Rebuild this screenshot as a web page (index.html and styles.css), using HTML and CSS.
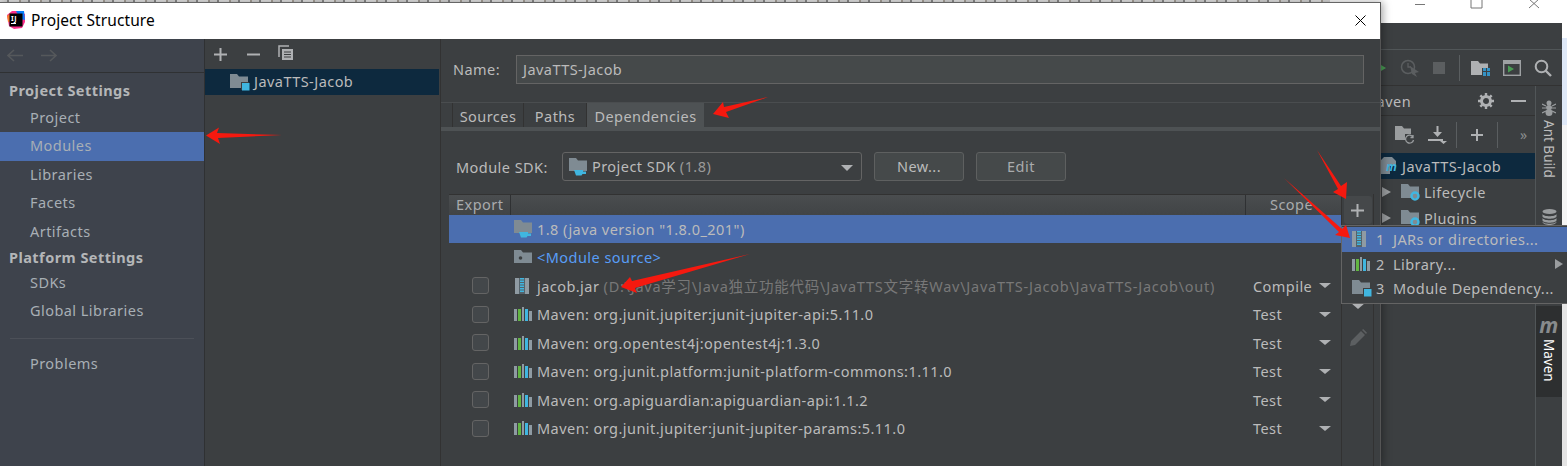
FILE: index.html
```html
<!DOCTYPE html>
<html lang="en">
<head>
<meta charset="utf-8">
<title>Project Structure</title>
<link rel="stylesheet" href="styles.css">
</head>
<body>
<svg class="defs" width="0" height="0">
  <symbol id="folder" viewBox="0 0 18 16"><path d="M0 1h7l2 2.5h9V15H0z" fill="#7f8b93"/></symbol>
  <symbol id="module" viewBox="0 0 20 18"><path d="M0 1h7l2 2.5h9V15H0z" fill="#7f8b93"/><rect x="11" y="9" width="8" height="8" fill="#3c3f41"/><rect x="12" y="10" width="7.5" height="7.5" fill="#40b6e0"/></symbol>
  <symbol id="jdk" viewBox="0 0 20 18"><path d="M0 0h7l2 2.5h9V13H0z" fill="#7f8b93"/><path d="M5 12h9v1.5h3V16h-3.500l-1 1.500h-5.500z" fill="#40b6e0"/></symbol>
  <symbol id="source" viewBox="0 0 18 16"><path d="M0 1h7l2 2.500h9V14H0z" fill="#7f8b93"/><circle cx="6.500" cy="9" r="1.800" fill="#3c3f41"/></symbol>
  <symbol id="lib" viewBox="0 0 18 16"><rect x="0" y="3" width="3" height="12" fill="#8f9ba3"/><rect x="4" y="3" width="3" height="12" fill="#62b543"/><rect x="8" y="1" width="2" height="14" fill="#8f9ba3"/><rect x="11" y="3" width="3" height="12" fill="#40b6e0"/><rect x="15" y="5" width="3" height="10" fill="#8f9ba3"/></symbol>
  <symbol id="jar" viewBox="0 0 14 18"><rect x="0" y="1" width="14" height="16" fill="#8f9ba3"/><rect x="4" y="1" width="6" height="16" fill="#55636b"/><path d="M5 1h4v1.500H5zM5 3.500h4V5H5zM5 6h4v1.500H5zM5 8.500h4V10H5zM5 11h4v1.500H5zM5 13.500h4V15H5z" fill="#40b6e0"/></symbol>
</svg>

<div class="desk">
  <div class="blogtop"></div>
  <div class="blogedge"></div>

  <div class="ide">
    <div class="ide-title">
      <svg class="winctl" width="134" height="10" viewBox="0 0 134 10"><path d="M0 4.500h10M56 -3h11v11H56zM114 -1l10 9M124 -1l-10 9" fill="none" stroke="#777"/></svg>
    </div>
    <div class="ide-menu"></div>
    <div class="ide-tools">
      <svg width="6" height="6" viewBox="0 0 6 6"><path d="M0 0l5 3-5 3z" fill="#499c54"/></svg>
      <svg width="20" height="18" viewBox="0 0 20 18"><circle cx="8" cy="8" r="6.500" fill="none" stroke="#5b5e60" stroke-width="1.500"/><path d="M8 4v4h3" fill="none" stroke="#5b5e60" stroke-width="1.300"/><path d="M10 7l9 6-4 1 2 4-5-3z" fill="#5b5e60"/></svg>
      <span class="tb-stop"></span>
      <span class="tb-sep"></span>
      <svg width="19" height="16" viewBox="0 0 19 16"><path d="M0 1h7l2 2.500h8V8h-6v7H0z" fill="#afb1b3"/><path d="M12 8h3v3h-3zM16 8h3v3h-3zM12 12h3v4h-3zM16 12h3v4h-3z" fill="#3592c4"/></svg>
      <svg width="18" height="16" viewBox="0 0 18 16"><rect x=".7" y=".7" width="16.600" height="14.600" fill="none" stroke="#9ea1a3" stroke-width="1.400"/><rect x="1" y="1" width="16" height="3" fill="#9ea1a3"/><path d="M5 5.500l6 3.500-6 3.500z" fill="#499c54"/></svg>
      <svg width="18" height="18" viewBox="0 0 18 18"><circle cx="7.500" cy="7.500" r="5.800" fill="none" stroke="#afb1b3" stroke-width="2"/><path d="M11.500 11.500l5.500 5.500" stroke="#afb1b3" stroke-width="2.400"/></svg>
    </div>
    <div class="ide-body">
      <div class="maven">
        <div class="mv-head">
          <span class="mv-title">Maven</span>
          <svg class="mv-gear" width="16" height="16" viewBox="0 0 16 16"><circle cx="8" cy="8" r="4.500" fill="none" stroke="#afb1b3" stroke-width="3"/><path d="M8 0v3M8 13v3M0 8h3M13 8h3M2.300 2.300l2.100 2.100M11.600 11.600l2.100 2.100M2.300 13.700l2.100-2.100M11.600 4.400l2.100-2.100" stroke="#afb1b3" stroke-width="2.400"/></svg>
          <span class="mv-min"></span>
        </div>
        <div class="mv-tools">
          <svg width="20" height="18" viewBox="0 0 20 18"><path d="M0 0h7l2 2.500h7V8h-6v6H0z" fill="#9a9d9f"/><path d="M18 11a4 4 0 1 0 .5 3M18 9v2.500h-2.500" fill="none" stroke="#9a9d9f" stroke-width="1.300"/></svg>
          <svg width="20" height="18" viewBox="0 0 20 18"><path d="M8.500 0h2v6H14l-4.500 5L5 6h3.500zM0 13h15v2H0zM12 15h7l-3.500 3z" fill="#afb1b3"/></svg>
          <span class="mv-sep first"></span>
          <svg width="14" height="14" viewBox="0 0 14 14"><path d="M7 1v12M1 7h12" stroke="#afb1b3" stroke-width="2"/></svg>
          <span class="mv-sep"></span>
          <span class="mv-more">»</span>
        </div>
        <div class="tree-row tree-sel">
          <svg class="mv-file" width="20" height="18" viewBox="0 0 20 18"><path d="M3 0h8l4 4v5H9v8H0V3z" fill="#7f8b93"/><text x="5" y="14" class="mv-m">m</text></svg>
          <span>JavaTTS-Jacob</span>
        </div>
        <div class="tree-row tree-child">
          <span class="caret"></span>
          <svg width="20" height="18"><use href="#folder" width="18" height="16"/><circle cx="14" cy="13" r="3.500" fill="none" stroke="#40b6e0" stroke-width="2.400"/></svg>
          <span>Lifecycle</span>
        </div>
        <div class="tree-row tree-child">
          <span class="caret"></span>
          <svg width="20" height="18"><use href="#folder" width="18" height="16"/><circle cx="14" cy="13" r="3.500" fill="none" stroke="#40b6e0" stroke-width="2.400"/></svg>
          <span>Plugins</span>
        </div>
      </div>
      <div class="strip">
        <svg class="ant" width="14" height="16" viewBox="0 0 14 16"><ellipse cx="7" cy="3" rx="2.500" ry="2.500" fill="#9a9d9f"/><ellipse cx="7" cy="7.500" rx="3" ry="2.500" fill="#9a9d9f"/><ellipse cx="7" cy="12.500" rx="3.500" ry="3.500" fill="#9a9d9f"/><path d="M0 4l4 2M14 4l-4 2M0 8h4M14 8h-4M0 13l4-2M14 13l-4-2" stroke="#9a9d9f" stroke-width="1.200"/></svg>
        <span class="vtext vt-ant">Ant Build</span>
        <svg class="db" width="15" height="16" viewBox="0 0 15 16"><ellipse cx="7.500" cy="2.500" rx="7" ry="2.500" fill="#9a9d9f"/><path d="M.5 5c1 3 13 3 14 0v2.500c-1 3-13 3-14 0zM.5 9c1 3 13 3 14 0v2.500c-1 3-13 3-14 0zM.5 12.500c1 3 13 3 14 0V13c-1 4-13 4-14 0z" fill="#9a9d9f"/></svg>
        <div class="mvn-tab">
          <span class="mvn-m">m</span>
          <span class="vtext vt-mvn">Maven</span>
        </div>
      </div>
    </div>
  </div>

  <div class="dialog">
    <div class="d-title">
      <svg class="logo" width="20" height="20" viewBox="0 0 20 20"><path d="M1 5L6 1l8 0 5 3v8l-3 6-8 1-5-3z" fill="#fc318c"/><path d="M10 1h8l1 9-5-1z" fill="#087cfa"/><path d="M1 6l4-3 1 8-4 1z" fill="#fe7c2f"/><rect x="3.500" y="3.500" width="13" height="13" fill="#000"/><text x="5" y="10.500" class="logo-t">IJ</text><rect x="5" y="13" width="5" height="1" fill="#fff"/></svg>
      <span class="d-title-text">Project Structure</span>
      <svg class="d-close" width="11" height="11" viewBox="0 0 11 11"><path d="M.5.500l10 10M10.500.500l-10 10" stroke="#000" stroke-width="1"/></svg>
    </div>
    <div class="d-body">
      <aside class="side">
        <div class="side-nav">
          <svg width="17" height="13" viewBox="0 0 17 13"><path d="M1 6.500h15M7 1L1 6.500 7 12" fill="none" stroke="#55585b" stroke-width="1.600"/></svg>
          <svg width="17" height="13" viewBox="0 0 17 13"><path d="M16 6.500H1M10 1l6 5.500L10 12" fill="none" stroke="#55585b" stroke-width="1.600"/></svg>
        </div>
        <div class="side-list">
          <div class="side-head">Project Settings</div>
          <div class="side-item">Project</div>
          <div class="side-item is-on">Modules</div>
          <div class="side-item">Libraries</div>
          <div class="side-item">Facets</div>
          <div class="side-item">Artifacts</div>
          <div class="side-head second">Platform Settings</div>
          <div class="side-item">SDKs</div>
          <div class="side-item">Global Libraries</div>
          <div class="side-div"></div>
          <div class="side-item">Problems</div>
        </div>
      </aside>

      <section class="mods">
        <div class="mods-tools">
          <svg width="13" height="13" viewBox="0 0 13 13"><path d="M6.500 0v13M0 6.500h13" stroke="#afb1b3" stroke-width="2"/></svg>
          <svg width="13" height="13" viewBox="0 0 13 13"><path d="M0 6.500h13" stroke="#afb1b3" stroke-width="2"/></svg>
          <svg class="copy-ico" width="16" height="16" viewBox="0 0 16 16"><path d="M1 12V1h10" fill="none" stroke="#afb1b3" stroke-width="1.500"/><rect x="4" y="4" width="11" height="11" fill="#afb1b3"/><path d="M6 7h7M6 9.500h7M6 12h7" stroke="#3c3f41"/></svg>
        </div>
        <div class="mods-row">
          <svg width="20" height="18"><use href="#module" width="20" height="18"/></svg>
          <span class="mods-name">JavaTTS-Jacob</span>
        </div>
      </section>

      <main class="panel">
        <div class="name-row">
          <label class="name-label">Name:</label>
          <div class="name-input">JavaTTS-Jacob</div>
        </div>
        <div class="tabs">
          <span class="tab t1">Sources</span>
          <span class="tab t2">Paths</span>
          <span class="tab t3 is-on">Dependencies</span>
        </div>
        <div class="tabs-line"></div>
        <div class="sdk-row">
          <span class="sdk-label">Module SDK:</span>
          <div class="combo">
            <svg width="20" height="18"><use href="#jdk" width="20" height="18"/></svg>
            <span class="combo-text">Project SDK <em class="dim">(1.8)</em></span>
            <span class="combo-arrow"></span>
          </div>
          <span class="btn b-new">New...</span>
          <span class="btn b-edit">Edit</span>
        </div>
        <div class="dep-wrap">
          <div class="dep-table">
            <div class="dep-head">
              <span class="h-export">Export</span>
              <span class="h-mid"></span>
              <span class="h-scope">Scope</span>
            </div>
            <div class="dep-row is-sel">
              <span class="cb none"></span>
              <svg class="ico ico-jdk" width="20" height="18"><use href="#jdk" width="20" height="18"/></svg>
              <span class="dep-name">1.8 (java version "1.8.0_201")</span>
            </div>
            <div class="dep-row">
              <span class="cb none"></span>
              <svg class="ico" width="18" height="16"><use href="#source" width="18" height="16"/></svg>
              <span class="dep-name link">&lt;Module source&gt;</span>
            </div>
            <div class="dep-row">
              <span class="cb"></span>
              <svg class="ico" width="18" height="18"><use href="#jar" x="1" width="14" height="18"/></svg>
              <span class="dep-name">jacob.jar <span class="path">(D:\Java学习\Java独立功能代码\JavaTTS文字转Wav\JavaTTS-Jacob\JavaTTS-Jacob\out)</span></span>
              <span class="scope">Compile</span><span class="arrow"></span>
            </div>
            <div class="dep-row">
              <span class="cb"></span>
              <svg class="ico" width="18" height="16"><use href="#lib" width="18" height="16"/></svg>
              <span class="dep-name">Maven: org.junit.jupiter:junit-jupiter-api:5.11.0</span>
              <span class="scope">Test</span><span class="arrow"></span>
            </div>
            <div class="dep-row">
              <span class="cb"></span>
              <svg class="ico" width="18" height="16"><use href="#lib" width="18" height="16"/></svg>
              <span class="dep-name">Maven: org.opentest4j:opentest4j:1.3.0</span>
              <span class="scope">Test</span><span class="arrow"></span>
            </div>
            <div class="dep-row">
              <span class="cb"></span>
              <svg class="ico" width="18" height="16"><use href="#lib" width="18" height="16"/></svg>
              <span class="dep-name">Maven: org.junit.platform:junit-platform-commons:1.11.0</span>
              <span class="scope">Test</span><span class="arrow"></span>
            </div>
            <div class="dep-row">
              <span class="cb"></span>
              <svg class="ico" width="18" height="16"><use href="#lib" width="18" height="16"/></svg>
              <span class="dep-name">Maven: org.apiguardian:apiguardian-api:1.1.2</span>
              <span class="scope">Test</span><span class="arrow"></span>
            </div>
            <div class="dep-row">
              <span class="cb"></span>
              <svg class="ico" width="18" height="16"><use href="#lib" width="18" height="16"/></svg>
              <span class="dep-name">Maven: org.junit.jupiter:junit-jupiter-params:5.11.0</span>
              <span class="scope">Test</span><span class="arrow"></span>
            </div>
          </div>
          <div class="dep-tools">
            <span class="plus-btn"><svg width="13" height="13" viewBox="0 0 13 13"><path d="M6.500 0v13M0 6.500h13" stroke="#afb1b3" stroke-width="2"/></svg></span>
            <span class="tool-down"></span>
            <svg class="tool-pencil" width="18" height="18" viewBox="0 0 18 18"><path d="M1 17l1-5L12 2l4 4L6 16zM13 1l1.200-1 3.800 3.800-1 1.200z" fill="#5c5f61"/></svg>
          </div>
          <div class="dep-gutter"></div>
        </div>
      </main>
    </div>
  </div>

  <div class="popup">
    <div class="pop-row is-sel">
      <svg class="pop-ico" width="14" height="18"><use href="#jar" width="14" height="18"/></svg>
      <span class="pop-n">1</span><span>JARs or directories...</span>
    </div>
    <div class="pop-row">
      <svg class="pop-ico" width="18" height="16"><use href="#lib" width="18" height="16"/></svg>
      <span class="pop-n">2</span><span>Library...</span><span class="pop-sub"></span>
    </div>
    <div class="pop-row">
      <svg class="pop-ico" width="20" height="18"><use href="#module" width="20" height="18"/></svg>
      <span class="pop-n">3</span><span>Module Dependency...</span>
    </div>
  </div>

  <svg class="marks" width="1567" height="466" viewBox="0 0 1567 466">
    <g fill="#f5190f">
      <path d="M206 135.500L219 127.500 217 133 282 135 218 138 220 144z"/>
      <path d="M713 114L723 102 724 107 768 97 726 112 729 118z"/>
      <path d="M621 287L630 277 632 281 750 254 635 288 637 293z"/>
      <path d="M1317 150L1341 186 1347 182 1346 199 1333 192 1338 189z"/>
      <path d="M1284 178L1342 229 1346 225 1350 238 1335 235 1339 232z"/>
    </g>
  </svg>
</div>
</body>
</html>
```

FILE: styles.css
```css
* { box-sizing: border-box; }
html, body { margin: 0; padding: 0; height: 100%; background: #eee; overflow: hidden; }
body { font-family: "Noto Sans", "Noto Sans CJK SC", sans-serif; font-size: 14.5px; letter-spacing: .45px; color: #bbbbbb; }
svg { display: block; flex: none; }
.defs { position: absolute; }

.desk { position: relative; width: 1567px; height: 466px; overflow: hidden; background: #f1f1f1; }
.blogtop {
  position: absolute; left: 0; top: 0; width: 1400px; height: 3px;
  background: repeating-linear-gradient(90deg, #d8d8d8 0 7px, #8b8b8b 7px 9px, #e6e6e6 9px 19px, #a8a29a 19px 21px);
}
.blogedge {
  position: absolute; left: 1562px; top: 0; width: 5px; height: 466px;
  background: linear-gradient(#fff 0 38px, #dfe9f8 38px 125px, #f4f4f4 125px 300px, #e4e4e4 300px);
}

/* IDE window behind the dialog */
.ide { position: absolute; left: 1330px; top: 0; width: 232px; height: 466px; background: #3c3f41; display: flex; flex-direction: column; }
.ide-title { height: 23px; background: #fff; position: relative; flex: none; }
.winctl { position: absolute; left: 85px; top: 0; }
.ide-menu { height: 27px; border-bottom: 1px solid #515658; flex: none; }
.ide-tools { height: 35px; flex: none; display: flex; align-items: center; gap: 13px; padding-right: 10px; justify-content: flex-end; }
.tb-stop { width: 12px; height: 12px; background: #5b5e60; }
.tb-sep { width: 1px; height: 26px; background: #5a5e60; margin: 0 -2px 0 1px; }
.ide-body { flex: 1; display: flex; border-top: 1px solid #323232; min-height: 0; }
.maven { flex: 1; min-width: 0; display: flex; flex-direction: column; }
.mv-head { height: 30px; flex: none; display: flex; align-items: center; padding-left: 33px; padding-top: 1px; border-bottom: 1px solid #323232; }
.mv-title { width: 115px; }
.mv-gear { margin-right: 17px; margin-top: -1px; }
.mv-min { width: 15px; height: 2px; background: #afb1b3; margin-top: -1px; }
.mv-tools { height: 37px; flex: none; display: flex; align-items: center; padding-left: 65px; gap: 13px; }
.mv-sep { width: 1px; height: 26px; background: #5a5e60; flex: none; }
.mv-sep.first { margin-left: -5px; }
.mv-more { font-size: 14px; margin-left: 9px; color: #8a8d8f; }
.tree-row { display: flex; align-items: center; height: 26px; flex: none; }
.tree-sel { background: #0d293e; margin-left: 50px; padding-left: 1px; gap: 1px; }
.tree-child { margin-left: 52px; }
.tree-child span:last-child { margin-left: 3px; }
.caret { width: 0; height: 0; border-left: 9px solid #9a9d9f; border-top: 5px solid transparent; border-bottom: 5px solid transparent; margin-right: 10px; }
.mv-file { overflow: visible; }
.mv-m { font: italic 700 12px "Noto Sans", sans-serif; fill: #40b6e0; }
.strip { width: 27px; flex: none; border-left: 1px solid #515658; display: flex; flex-direction: column; align-items: center; position: relative; }
.ant { margin-top: 14px; }
.vtext { writing-mode: vertical-rl; font-size: 13.500px; line-height: 14px; letter-spacing: 0; }
.vt-ant { margin-top: 4px; color: #bbb; }
.db { margin-top: 31px; }
.mvn-tab { margin-top: 81px; width: 26px; height: 91px; background: #2d2f30; display: flex; flex-direction: column; align-items: center; }
.mvn-m { font: italic 700 21px/20px "Noto Sans", sans-serif; color: #888b8d; margin-top: 9px; }
.vt-mvn { color: #fff; margin-top: 4px; }

/* Dialog */
.dialog { position: absolute; left: 0; top: 2px; width: 1381px; height: 464px; border-top: 1px solid #666; border-right: 1px solid #555; background: #3c3f41; display: flex; flex-direction: column; box-shadow: 2px 0 8px rgba(0,0,0,.35); }
.d-title { height: 36px; flex: none; background: #fff; display: flex; align-items: center; padding-left: 6px; padding-bottom: 2px; color: #000; }
.logo { margin-right: 5px; }
.logo-t { font: 700 7px "Noto Sans", sans-serif; fill: #fff; }
.d-title-text { font-size: 15.500px; letter-spacing: .1px; flex: 1; }
.d-close { margin-right: 14px; }
.d-body { flex: 1; display: flex; min-height: 0; }

.side { width: 205px; flex: none; background: #3e434c; border-right: 1px solid #2f3133; display: flex; flex-direction: column; }
.side-nav { height: 34px; flex: none; display: flex; align-items: center; gap: 16px; padding-left: 7px; border-bottom: 1px solid #2f3133; }
.side-list { display: flex; flex-direction: column; padding-top: 5px; }
.side-head { height: 25.500px; line-height: 25px; padding-left: 9px; font-weight: 700; color: #b4b6b8; flex: none; }
.side-head.second { height: 22.500px; line-height: 22px; }
.side-item { height: 28.500px; line-height: 27px; padding-left: 30px; color: #a8afb5; flex: none; }
.side-item.is-on { background: #4b6eaf; }
.side-div { height: 1px; margin: 12px 10px 11.500px 10px; background: #4c5058; flex: none; }

.mods { width: 236px; flex: none; border-right: 1px solid #323232; }
.mods-tools { height: 30px; display: flex; align-items: center; gap: 20px; padding-left: 9px; }
.copy-ico { margin-left: -2px; margin-top: -2px; }
.mods-row { height: 26px; display: flex; align-items: center; background: #0d293e; padding-left: 25px; gap: 4px; margin-right: 1px; }
.mods-name { margin-top: -3px; }

.panel { flex: 1; min-width: 0; display: flex; flex-direction: column; }
.name-row { display: flex; align-items: center; height: 29px; margin-top: 16px; padding-left: 12px; flex: none; }
.name-label { width: 63px; margin-top: -2px; }
.name-input { width: 848px; height: 29px; line-height: 27px; background: #45494a; border: 1px solid #646464; padding-left: 6px; }
.tabs { display: flex; margin-top: 18px; height: 26px; padding-left: 11px; border-top: 1px solid #4a4d4f; flex: none; }
.tab { height: 25px; line-height: 26px; text-align: center; border-right: 1px solid #323232; }
.t1 { width: 72px; border-left: 1px solid #323232; }
.t2 { width: 63px; }
.t3 { width: 117px; }
.tab.is-on { background: #4e5254; border-right: 0; }
.tabs-line { height: 4px; background: #4e5254; flex: none; margin-top: -1px; }
.sdk-row { display: flex; align-items: center; height: 29px; margin-top: 21px; padding-left: 15px; flex: none; }
.sdk-label { width: 106px; }
.combo { width: 300px; height: 29px; border: 1px solid #646464; border-radius: 3px; background: #3c3f41; display: flex; align-items: center; padding-left: 6px; gap: 3px; position: relative; }
.combo-text { margin-top: -2px; }
.dim { font-style: normal; color: #999; }
.combo-arrow { position: absolute; right: 8px; top: 12px; width: 0; height: 0; border-top: 6px solid #afb1b3; border-left: 6px solid transparent; border-right: 6px solid transparent; }
.btn { height: 29px; line-height: 27px; text-align: center; border: 1px solid #5e6060; border-radius: 3px; background: #45494a; }
.b-new { width: 90px; margin-left: 12px; }
.b-edit { width: 90px; margin-left: 12px; color: #a9abad; }

.dep-wrap { display: flex; flex: 1; margin-top: 13px; padding-left: 8px; min-height: 0; }
.dep-table { width: 892px; flex: none; border-top: 1px solid #323232; }
.dep-head { height: 20px; display: flex; background: linear-gradient(#4a4d4f, #414446); color: #a9abad; line-height: 19px; }
.h-export { width: 62px; padding-left: 7px; border-right: 1px solid #2f3133; }
.h-mid { width: 735px; border-right: 1px solid #2f3133; }
.h-scope { padding-left: 24px; }
.dep-row { height: 28.500px; display: flex; align-items: center; padding-left: 23px; }
.dep-row.is-sel { background: #4b6eaf; height: 28px; }
.cb { width: 17px; height: 17px; border: 1px solid #646464; border-radius: 3px; background: #43474a; flex: none; margin-right: 25px; }
.cb.none { visibility: hidden; }
.ico { margin-right: 5px; }
.ico-jdk { margin-right: 3px; }
.dep-name { flex: 1; white-space: nowrap; }
.link { color: #589df6; }
.path { color: #787878; letter-spacing: .75px; }
.scope { width: 66px; flex: none; }
.arrow { width: 0; height: 0; border-top: 5px solid #afb1b3; border-left: 6px solid transparent; border-right: 6px solid transparent; margin-right: 10px; flex: none; }

.dep-tools { width: 32px; flex: none; display: flex; flex-direction: column; align-items: center; border-left: 1px solid #323232; }
.plus-btn { width: 28px; height: 28px; margin-top: 2px; background: #45484a; border-radius: 3px; display: flex; align-items: center; justify-content: center; }
.tool-down { width: 0; height: 0; margin-top: 79px; border-top: 6px solid #afb1b3; border-left: 7px solid transparent; border-right: 7px solid transparent; }
.tool-pencil { margin-top: 20px; }
.dep-gutter { width: 7px; flex: none; border-left: 1px solid #323232; background: #3c3f41; }

/* Popup */
.popup { position: absolute; left: 1341px; top: 225px; width: 226px; height: 79px; background: #3c3f41; border: 1px solid #646464; border-right: 0; padding-top: 1px; display: flex; flex-direction: column; }
.pop-row { height: 24.500px; display: flex; align-items: center; padding-left: 10px; position: relative; flex: none; white-space: nowrap; }
.pop-row.is-sel { background: #4b6eaf; }
.pop-ico { position: absolute; left: 10px; }
.pop-n { width: 17px; margin-left: 24px; }
.pop-sub { position: absolute; right: 4px; top: 7px; width: 0; height: 0; border-left: 8px solid #9a9d9f; border-top: 5px solid transparent; border-bottom: 5px solid transparent; }

.marks { position: absolute; left: 0; top: 0; pointer-events: none; }
```
